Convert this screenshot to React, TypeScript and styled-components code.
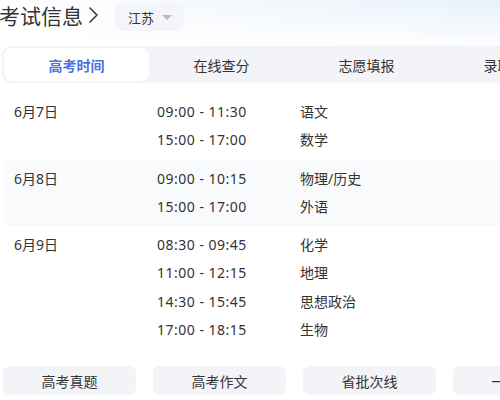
import React from "react";
import styled, { createGlobalStyle } from "styled-components";

const Global = createGlobalStyle`
  html, body { margin: 0; padding: 0; background: #fff; }
  body { width: 500px; height: 400px; overflow: hidden; font-family: "Noto Sans", "Noto Sans CJK SC", sans-serif; color: #333; }
`;

const Page = styled.div`
  width: 500px;
  height: 400px;
  overflow: hidden;
  background: linear-gradient(180deg, rgba(255,255,255,0) 0px, #fff 48px),
    linear-gradient(90deg, #ffffff 0%, #f4f8fc 45%, #e6f1fb 100%);
`;

const Header = styled.div`
  display: flex;
  align-items: center;
  height: 34px;
`;

const Title = styled.div`
  display: flex;
  align-items: center;
  font-size: 21px;
  line-height: 28px;
  color: #333;
  font-family: "Noto Sans CJK SC", sans-serif;
  margin-left: -1px;
  margin-top: -4px;
`;

const Chevron = styled.svg`
  margin-left: 4px;
  width: 12px;
  height: 18px;
`;

const Region = styled.div`
  display: flex;
  align-items: center;
  gap: 8px;
  margin-left: 16px;
  height: 28px;
  padding: 0 12px 0 13px;
  border-radius: 8px;
  background: #f3f5f8;
  font-size: 13px;
  color: #333;
  font-family: "Noto Sans CJK SC", sans-serif;
`;

const Caret = styled.span`
  width: 0;
  height: 0;
  border-left: 5px solid transparent;
  border-right: 5px solid transparent;
  border-top: 5px solid #b8bcc4;
  margin-top: 1px;
`;

const TabBar = styled.div`
  display: flex;
  margin: 12px 0 0 2px;
  width: 640px;
  padding: 2px;
  border-radius: 9px;
  background: #f3f4f8;
`;

const Tab = styled.div<{ $active?: boolean }>`
  flex: 0 0 145px;
  height: 33px;
  display: flex;
  align-items: center;
  justify-content: center;
  border-radius: 8px;
  font-size: 14px;
  font-family: "Noto Sans CJK SC", sans-serif;
  background: ${(p) => (p.$active ? "#fff" : "transparent")};
  color: ${(p) => (p.$active ? "#4d6fe0" : "#333")};
  font-weight: ${(p) => (p.$active ? 600 : 400)};
`;

const Schedule = styled.div`
  margin-top: 10px;
  display: flex;
  flex-direction: column;
`;

const Group = styled.div<{ $shade?: boolean }>`
  display: grid;
  grid-template-columns: 143px 143px 1fr;
  padding: 5px 0 5px 10px;
  margin-left: 4px;
  background: ${(p) => (p.$shade ? "#f9fafc" : "transparent")};
`;

const DateCell = styled.div<{ $rows: number }>`
  grid-row: span ${(p) => p.$rows};
  font-size: 14px;
  line-height: 28px;
  height: 28px;
  color: #333;
  font-family: "Noto Sans", "Noto Sans CJK SC", sans-serif;
`;

const Cell = styled.div<{ $time?: boolean }>`
  font-size: 14px;
  line-height: 28px;
  height: 28.3px;
  color: #333;
  letter-spacing: ${(p) => (p.$time ? "0.5px" : "0")};
  font-family: "Noto Sans", "Noto Sans CJK SC", sans-serif;
  white-space: nowrap;
`;

const Buttons = styled.div`
  display: flex;
  gap: 17px;
  margin: 17px 0 0 3px;
  width: 700px;
`;

const QuickButton = styled.div`
  flex: 0 0 133px;
  height: 29px;
  display: flex;
  align-items: center;
  justify-content: center;
  border-radius: 7px;
  background: #f3f4f7;
  font-size: 14px;
  color: #333;
  font-family: "Noto Sans CJK SC", sans-serif;
`;

const tabs = ["高考时间", "在线查分", "志愿填报", "录取查询"];

const schedule = [
  {
    date: "6月7日",
    items: [
      ["09:00 - 11:30", "语文"],
      ["15:00 - 17:00", "数学"],
    ],
  },
  {
    date: "6月8日",
    items: [
      ["09:00 - 10:15", "物理/历史"],
      ["15:00 - 17:00", "外语"],
    ],
  },
  {
    date: "6月9日",
    items: [
      ["08:30 - 09:45", "化学"],
      ["11:00 - 12:15", "地理"],
      ["14:30 - 15:45", "思想政治"],
      ["17:00 - 18:15", "生物"],
    ],
  },
];

const quick = ["高考真题", "高考作文", "省批次线", "一分一段"];

export default function App() {
  return (
    <Page>
      <Global />
      <Header>
        <Title>
          考试信息
          <Chevron viewBox="0 0 12 18">
            <path d="M3 2 L10 9 L3 16" fill="none" stroke="#333" strokeWidth="1.5" strokeLinecap="round" strokeLinejoin="round" />
          </Chevron>
        </Title>
        <Region>
          江苏
          <Caret />
        </Region>
      </Header>
      <TabBar>
        {tabs.map((t, i) => (
          <Tab key={t} $active={i === 0}>
            {t}
          </Tab>
        ))}
      </TabBar>
      <Schedule>
        {schedule.map((g, gi) => (
          <Group key={g.date} $shade={gi === 1}>
            <DateCell $rows={g.items.length}>{g.date}</DateCell>
            {g.items.map(([time, subject]) => (
              <React.Fragment key={time + subject}>
                <Cell $time>{time}</Cell>
                <Cell>{subject}</Cell>
              </React.Fragment>
            ))}
          </Group>
        ))}
      </Schedule>
      <Buttons>
        {quick.map((q) => (
          <QuickButton key={q}>{q}</QuickButton>
        ))}
      </Buttons>
    </Page>
  );
}
